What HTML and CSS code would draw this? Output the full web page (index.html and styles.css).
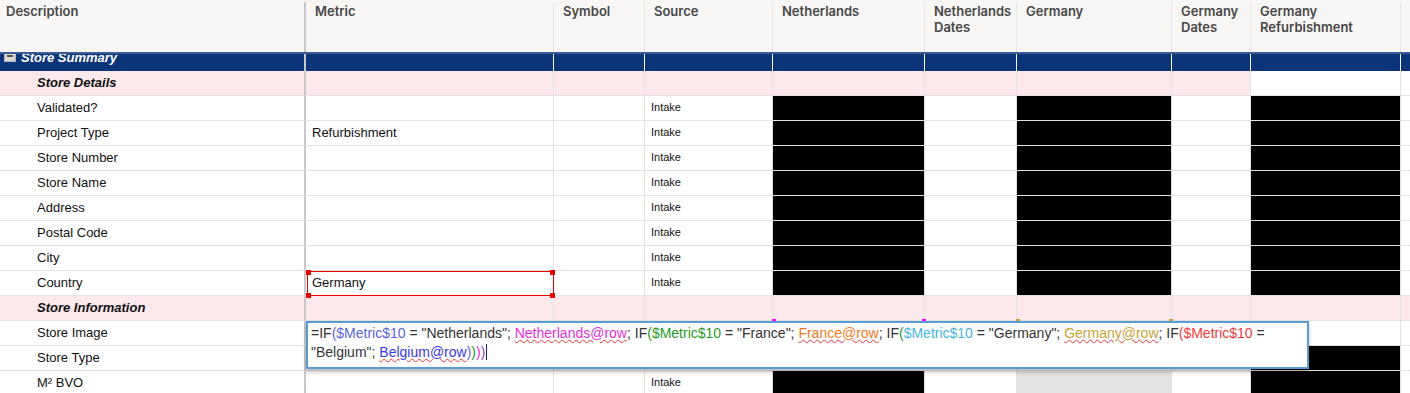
FILE: index.html
```html
<!DOCTYPE html>
<html lang="en">
<head>
    <meta charset="UTF-8">
    <meta name="viewport" content="width=device-width, initial-scale=1.0">
    <title>Store Summary</title>
    <link rel="stylesheet" href="styles.css">
</head>
<body>
    <div class="sheet">
        <div class="row head">
            <div class="c">Description</div>
            <div class="c">Metric</div>
            <div class="c">Symbol</div>
            <div class="c">Source</div>
            <div class="c">Netherlands</div>
            <div class="c">Netherlands Dates</div>
            <div class="c">Germany</div>
            <div class="c">Germany Dates</div>
            <div class="c">Germany Refurbishment</div>
            <div class="c"></div>
        </div>

        <div class="row navy">
            <div class="c"><span class="title"><i class="toggle"></i>Store Summary</span></div>
            <div class="c"></div><div class="c"></div><div class="c"></div><div class="c"></div>
            <div class="c"></div><div class="c"></div><div class="c"></div><div class="c"></div><div class="c"></div>
        </div>

        <div class="row pk">
            <div class="c">Store Details</div>
            <div class="c"></div><div class="c"></div><div class="c"></div><div class="c"></div>
            <div class="c"></div><div class="c"></div><div class="c"></div>
            <div class="c wt"></div><div class="c wt"></div>
        </div>

        <div class="row">
            <div class="c">Validated?</div>
            <div class="c"></div><div class="c"></div><div class="c src">Intake</div>
            <div class="c blk"></div><div class="c"></div><div class="c blk"></div><div class="c"></div><div class="c blk"></div><div class="c"></div>
        </div>
        <div class="row">
            <div class="c">Project Type</div>
            <div class="c">Refurbishment</div><div class="c"></div><div class="c src">Intake</div>
            <div class="c blk"></div><div class="c"></div><div class="c blk"></div><div class="c"></div><div class="c blk"></div><div class="c"></div>
        </div>
        <div class="row">
            <div class="c">Store Number</div>
            <div class="c"></div><div class="c"></div><div class="c src">Intake</div>
            <div class="c blk"></div><div class="c"></div><div class="c blk"></div><div class="c"></div><div class="c blk"></div><div class="c"></div>
        </div>
        <div class="row">
            <div class="c">Store Name</div>
            <div class="c"></div><div class="c"></div><div class="c src">Intake</div>
            <div class="c blk"></div><div class="c"></div><div class="c blk"></div><div class="c"></div><div class="c blk"></div><div class="c"></div>
        </div>
        <div class="row">
            <div class="c">Address</div>
            <div class="c"></div><div class="c"></div><div class="c src">Intake</div>
            <div class="c blk"></div><div class="c"></div><div class="c blk"></div><div class="c"></div><div class="c blk"></div><div class="c"></div>
        </div>
        <div class="row">
            <div class="c">Postal Code</div>
            <div class="c"></div><div class="c"></div><div class="c src">Intake</div>
            <div class="c blk"></div><div class="c"></div><div class="c blk"></div><div class="c"></div><div class="c blk"></div><div class="c"></div>
        </div>
        <div class="row">
            <div class="c">City</div>
            <div class="c"></div><div class="c"></div><div class="c src">Intake</div>
            <div class="c blk"></div><div class="c"></div><div class="c blk"></div><div class="c"></div><div class="c blk"></div><div class="c"></div>
        </div>
        <div class="row">
            <div class="c">Country</div>
            <div class="c sel">Germany<i class="h tl"></i><i class="h tr"></i><i class="h bl"></i><i class="h br"></i></div>
            <div class="c"></div><div class="c src">Intake</div>
            <div class="c blk"></div><div class="c"></div><div class="c blk"></div><div class="c"></div><div class="c blk"></div><div class="c"></div>
        </div>

        <div class="row pk">
            <div class="c">Store Information</div>
            <div class="c"></div><div class="c"></div><div class="c"></div><div class="c"></div>
            <div class="c"></div><div class="c"></div><div class="c"></div><div class="c"></div><div class="c"></div>
        </div>

        <!-- these two rows sit under the formula editor -->
        <div class="row">
            <div class="c">Store Image</div>
            <div class="c"></div><div class="c"></div><div class="c"></div>
            <div class="c"></div><div class="c"></div><div class="c"></div><div class="c"></div><div class="c"></div><div class="c"></div>
        </div>
        <div class="row">
            <div class="c">Store Type</div>
            <div class="c"></div><div class="c"></div><div class="c"></div>
            <div class="c"></div><div class="c"></div><div class="c"></div><div class="c"></div><div class="c blk"></div><div class="c"></div>
        </div>
        <div class="row">
            <div class="c">M² BVO</div>
            <div class="c"></div><div class="c"></div><div class="c src">Intake</div>
            <div class="c blk"></div><div class="c"></div><div class="c gry"></div><div class="c"></div><div class="c blk"></div><div class="c"></div>
        </div>

        <!-- range markers peeking out above the editor -->
        <i class="mark m1"></i>
        <i class="mark m2"></i>
        <i class="mark m3"></i>
        <i class="mark m4"></i>

        <div class="editor">=IF<span class="k1">($Metric$10</span> = "Netherlands"; <span class="ref r1">Netherlands@row</span>; IF<span class="k2">($Metric$10</span> = "France"; <span class="ref r2">France@row</span>; IF<span class="k2">(</span><span class="k3">$Metric$10</span> = "Germany"; <span class="ref r3">Germany@row</span>; IF<span class="k4">($Metric$10</span> = "Belgium"; <span class="ref r4">Belgium@row</span><span class="k1">)</span><span class="k2">)</span><span class="r1">)</span><span class="k5">)</span><span class="caret"></span></div>
    </div>
</body>
</html>
```

FILE: styles.css
```css
* {
    box-sizing: border-box;
}

body {
    margin: 0;
    font-family: "Liberation Sans", Arial, sans-serif;
    font-size: 13px;
    color: #111;
    background-color: #fff;
    overflow: hidden;
}

.sheet {
    position: relative;
    width: 1410px;
    height: 393px;
    overflow: hidden;
}

.row {
    display: grid;
    grid-template-columns: 306px 248px 91px 128px 152px 92px 155px 79px 150px 1fr;
    height: 25px;
}

.c {
    display: flex;
    align-items: center;
    padding: 0 6px 2px;
    border-right: 1px solid #e2e2e2;
    border-bottom: 1px solid #e2e2e2;
    white-space: nowrap;
    overflow: hidden;
}

.c:first-child {
    padding-left: 37px;
    border-right: 2px solid #c8c8c8;
}

/* column headers */
.head {
    height: 54px;
    padding-top: 2px;
    background-color: #f7f6f4;
    border-bottom: 2px solid #3f5b96;
}

.head .c {
    align-items: flex-start;
    padding: 1px 4px 0 9px;
    font-family: Inter, "Liberation Sans", sans-serif;
    font-weight: 600;
    line-height: 16px;
    color: #474747;
    white-space: normal;
    border-bottom: none;
    border-right-color: #e6e6e6;
}

.head .c:first-child {
    padding-left: 6px;
    border-right-color: #c8c8c8;
}

/* group row, partly scrolled under the header */
.navy {
    height: 17px;
    background-color: #0c3479;
}

.navy .c {
    padding-bottom: 0;
    border-bottom: none;
    border-right-color: #fff;
}

.navy .c:first-child {
    align-items: flex-end;
    padding-left: 4px;
    border-right-color: #c8c8c8;
}

.title {
    line-height: 26px;
    color: #fff;
    font-weight: bold;
    font-style: italic;
}

.toggle {
    display: inline-block;
    width: 12px;
    height: 12px;
    margin-right: 5px;
    background-color: #d9d9d9;
    border: 1px solid #b5b5b5;
    position: relative;
}

.toggle::after {
    content: "";
    position: absolute;
    left: 2px;
    right: 2px;
    top: 4px;
    height: 2px;
    background-color: #555;
}

.pk {
    background-color: #fde8eb;
}

.pk .c:first-child {
    font-weight: bold;
    font-style: italic;
}

.wt {
    background-color: #fff;
}

.blk {
    background-color: #000;
}

.gry {
    background-color: #e3e3e3;
}

.src {
    align-items: flex-start;
    padding-top: 5px;
    font-size: 11px;
}

/* selected cell */
.sel {
    position: relative;
    overflow: visible;
}

.sel::after {
    content: "";
    position: absolute;
    left: 1px;
    top: 0;
    right: -1px;
    bottom: -1px;
    border: 1px solid #e60000;
}

.h {
    position: absolute;
    width: 5px;
    height: 5px;
    background-color: #e60000;
    z-index: 1;
}

.tl { left: 0; top: -1px; }
.tr { right: -2px; top: -1px; }
.bl { left: 0; bottom: -3px; }
.br { right: -2px; bottom: -3px; }

.mark {
    position: absolute;
    top: 319px;
    width: 4px;
    height: 3px;
}

.m1 { left: 772px; background-color: #ff00ff; }
.m2 { left: 922px; background-color: #ff00ff; }
.m3 { left: 1016px; background-color: #c9a033; }
.m4 { left: 1169px; background-color: #c9a033; }

/* formula editor */
.editor {
    position: absolute;
    left: 306px;
    top: 321px;
    width: 1003px;
    height: 48px;
    padding: 1px 40px 0 3px;
    background-color: #fff;
    border: 2px solid #5b9bd5;
    box-shadow: 0 3px 4px rgba(0, 0, 0, 0.25);
    font-size: 14px;
    line-height: 19px;
    color: #333;
    z-index: 2;
}

.ref {
    text-decoration: underline wavy #e33;
    text-decoration-thickness: 1px;
}

.k1 { color: #5865e0; }
.k2 { color: #1f9a1f; }
.k3 { color: #45b5e0; }
.k4 { color: #f03a3a; }
.k5 { color: #a23ce0; }
.r1 { color: #e030d8; }
.r2 { color: #f07a1e; }
.r3 { color: #c9a236; }
.r4 { color: #3a3ae8; }

.caret {
    display: inline-block;
    width: 1px;
    height: 16px;
    margin-left: 1px;
    vertical-align: -3px;
    background-color: #1a1a8a;
}
```
